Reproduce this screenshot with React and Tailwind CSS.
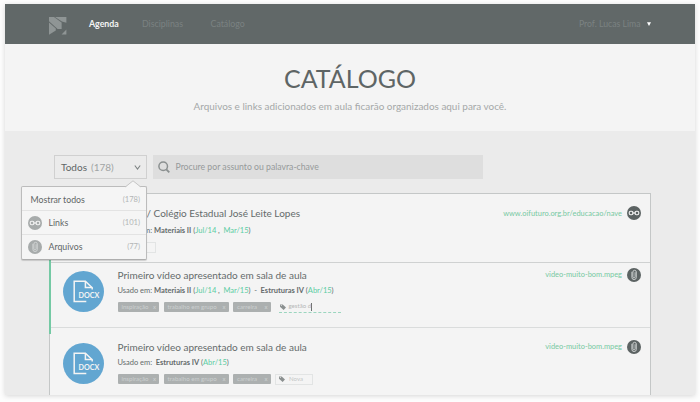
function Logo() {
  return (
    <svg className="h-[18px] w-[18px]" viewBox="0 0 18 18" fill="#8f9595">
      <path d="M0 0H5L12.6 5.4V12H8.6L0 4.2Z" />
      <path d="M6 0H17.4V5.8L12.9 4.6Z" />
      <path d="M0 5.4L6.8 11.6V13.6L0 17.8Z" />
      <path d="M17.4 12.6V17.6H12.6Z" />
    </svg>
  );
}

function LinkIcon({ color }) {
  return (
    <svg className="block size-3.5 shrink-0" viewBox="0 0 14 14">
      <circle cx="7" cy="7" r="7" fill={color} />
      <g fill="none" stroke="#f4f4f4" strokeWidth="1.1">
        <rect x="2.2" y="5.2" width="3.8" height="3.6" rx="1.5" />
        <rect x="8" y="5.2" width="3.8" height="3.6" rx="1.5" />
        <path d="M5 7H9" />
      </g>
    </svg>
  );
}

function ClipIcon({ color }) {
  return (
    <svg className="block size-3.5 shrink-0" viewBox="0 0 14 14">
      <circle cx="7" cy="7" r="7" fill={color} />
      <path
        d="M4.9 4.2V9.4A2.2 2.2 0 0 0 9.3 9.4V4A1.7 1.7 0 0 0 5.9 4V8.8A1.1 1.1 0 0 0 8.1 8.8V4.6"
        fill="none"
        stroke="#d3d6d6"
        strokeWidth="0.9"
        strokeLinecap="round"
      />
    </svg>
  );
}

function DocxIcon() {
  return (
    <svg className="mt-[7.5px] block size-[41px] shrink-0" viewBox="0 0 41 41">
      <circle cx="20.5" cy="20.5" r="20.5" fill="#62a6d1" />
      <g fill="none" stroke="#f4f4f4" strokeWidth="1.5">
        <path d="M23.3 30.6H11.2V10.3H22.4L29.2 16.8V18.6" />
        <path d="M22.4 10.3V16.6H29.2" />
      </g>
      <text x="15.6" y="26.8" fill="#f4f4f4" className="font-['Lato',sans-serif] text-[7.2px] font-bold">
        DOCX
      </text>
    </svg>
  );
}

function TagIcon() {
  return (
    <svg className="block size-[6px] shrink-0" viewBox="0 0 6 6">
      <path d="M0 0.4H2.7L6 3.5L3.6 5.9L0 2.8Z" fill="#8b9090" />
      <circle cx="1.3" cy="1.6" r="0.5" fill="#f4f4f4" />
    </svg>
  );
}

function Tag({ label, width }) {
  return (
    <span className={`flex h-[10.5px] items-center justify-between rounded-[1px] bg-[#acb0b0] pr-[3px] pl-1 text-[6.1px] leading-none text-[#cdd0d0] ${width}`}>
      <span>{label}</span>
      <span>x</span>
    </span>
  );
}

function Tags({ children }) {
  return (
    <div className="mt-[4.5px] flex h-[11px] items-start gap-[4.5px]">
      <Tag label="inspiração" width="w-[41.5px]" />
      <Tag label="trabalho em grupo" width="w-[65px]" />
      <Tag label="carreira" width="w-[37.5px]" />
      {children}
    </div>
  );
}

function NewTag() {
  return (
    <span className="flex h-[11px] w-[38px] items-center gap-1 border border-[#e2e4e4] pl-[3px] text-[6.1px] leading-none text-[#c4c7c7]">
      <TagIcon />
      Nova
    </span>
  );
}

function When({ children }) {
  return <span className="text-[#5acda3]">{children}</span>;
}

function Entry({ title, usage, tags, link, icon, thumb, className, usageGap = 'mt-[2px]' }) {
  return (
    <div className={`flex shrink-0 ${className}`}>
      <div className="w-[54.5px] shrink-0">{thumb}</div>
      <div className="flex-1">
        <div className="mt-1 text-[10px] leading-4 whitespace-pre text-[#646b6b]">{title}</div>
        <div className={`text-[7.5px] leading-3 [word-spacing:-0.1px] whitespace-pre text-[#646b6b] ${usageGap}`}>{usage}</div>
        {tags}
      </div>
      <div className="mt-[4px] flex h-4 items-center gap-[5px] text-[7.45px] text-[#77c9a2]">
        <span>{link}</span>
        {icon}
      </div>
    </div>
  );
}

function MenuRow({ icon, label, count }) {
  return (
    <div className="flex h-[24px] items-center border-t border-[#e3e3e3] pr-[6px] pl-[6px] first:h-[23px] first:border-t-0 first:pt-[2px] first:pl-[8.5px]">
      {icon && <span className="mr-[6.5px]">{icon}</span>}
      <span className="flex-1 text-[8.75px] text-[#5f6666]">{label}</span>
      <span className="text-[7.6px] text-[#b3b6b6]">{count}</span>
    </div>
  );
}

export default function App() {
  return (
    <div className="h-[402px] w-[700px] overflow-hidden bg-[#fdfdfd] px-[5px] pt-1 font-['Lato','Open_Sans',sans-serif]">
      <div className="flex h-[391px] flex-col bg-[#ebebeb] shadow-[0_1px_5px_rgba(0,0,0,0.16)]">
        <header className="flex h-10 shrink-0 items-center bg-[#616868] pr-[44.5px] pl-[44px] text-[8.8px] text-[#7b8282]">
          <div className="mt-[4px]"><Logo /></div>
          <span className="ml-[22px] w-[53px] font-bold text-[#f4f4f4]">Agenda</span>
          <span className="w-[68.5px]">Disciplinas</span>
          <span>Catálogo</span>
          <span className="ml-auto text-[8.7px]">Prof. Lucas Lima</span>
          <svg className="ml-[6px] h-1 w-1" viewBox="0 0 4 4"><path d="M0 0.3H4L2 4Z" fill="#fff" /></svg>
        </header>

        <section className="flex h-[87px] shrink-0 flex-col items-center bg-[#f4f4f4]">
          <h1 className="mt-[19px] text-[25px] leading-[30px] text-[#5e6565]">CATÁLOGO</h1>
          <p className="mt-[6px] text-[9.93px] leading-[14px] text-[#a5a8a8]">
            Arquivos e links adicionados em aula ficarão organizados aqui para você.
          </p>
        </section>

        <main className="flex min-h-0 flex-1 flex-col overflow-hidden pt-6 pl-[44px]">
          <div className="flex h-6 shrink-0 gap-[6px] pl-[5px]">
            <div className="relative flex w-[93px] items-center border border-[#d0d0d0] pr-[5px] pl-[6px] text-[10px] text-[#5f6666]">
              <span>Todos</span>
              <span className="ml-1 flex-1 text-[#a0a4a4]">(178)</span>
              <svg className="h-[5px] w-[7px]" viewBox="0 0 7 5"><path d="M0.8 0.5L3.5 4L6.2 0.5" fill="none" stroke="#7d8383" strokeWidth="1.1" /></svg>
              <div className="absolute top-[30px] left-[-34px] z-20 w-[126px] rounded-[2px] border border-[#bcbcbc] border-b-[#aeaeae] bg-[#f5f5f5] pb-px shadow-[0_1px_1px_rgba(0,0,0,0.15)]">
                <MenuRow label="Mostrar todos" count="(178)" />
                <MenuRow icon={<LinkIcon color="#a7abab" />} label="Links" count="(101)" />
                <MenuRow icon={<ClipIcon color="#a7abab" />} label="Arquivos" count="(77)" />
                <svg className="absolute -top-[7px] right-[5px] h-[8px] w-[16px]" viewBox="0 0 16 8">
                  <path d="M0.5 8V7L8 0.8L15.5 7V8Z" fill="#f5f5f5" />
                  <path d="M0.5 6.8L8 0.8L15.5 6.8" fill="none" stroke="#c4c4c4" />
                </svg>
              </div>
            </div>
            <div className="flex w-[330px] items-center gap-[5.5px] bg-[#dedede] pl-[5px] text-[8.7px] text-[#969a9a]">
              <svg className="size-3" viewBox="0 0 12 12" fill="none" stroke="#8b9090" strokeWidth="1.5">
                <circle cx="5.2" cy="5.2" r="4.3" />
                <path d="M8.3 8.3L11.3 11.3" strokeWidth="1.9" />
              </svg>
              Procure por assunto ou palavra-chave
            </div>
          </div>

          <div className="mt-[14px] flex w-[602px] flex-1 flex-col border border-b-0 border-[#c4c7c7] bg-[#f4f4f4]">
            <Entry
              className="h-[69px] border-b border-[#cfd1d1] pt-[7.4px] pr-[9px] pl-[13px]"
              usageGap="mt-[3.6px]"
              title="NAVE / Colégio Estadual José Leite Lopes"
              usage={<>Usado em: <b>Materiais II</b> (<When>Jul/14</When> ,  <When>Mar/15</When>)</>}
              tags={<div className="mt-[5px]"><NewTag /></div>}
              link="www.oifuturo.org.br/educacao/nave"
              icon={<LinkIcon color="#5c6363" />}
            />
            <Entry
              className="relative h-[65px] border-b border-[#dadcdc] pr-[9px] pl-[13px] before:absolute before:-top-[5px] before:-left-px before:z-10 before:h-[76px] before:w-[1.5px] before:bg-[#74c9a4]"
              thumb={<DocxIcon />}
              title="Primeiro vídeo apresentado em sala de aula"
              usage={<>Usado em: <b>Materiais II</b> (<When>Jul/14</When> ,  <When>Mar/15</When>)  -  <b>Estruturas IV</b> (<When>Abr/15</When>)</>}
              tags={
                <Tags>
                  <span className="ml-[3.5px] flex h-[11px] w-[62px] items-center gap-[3px] border-b border-dashed border-[#9bd6bf] pl-[1px] text-[6.1px] leading-none text-[#b4b7b7]">
                    <TagIcon />
                    <span className="flex h-[8px] items-center border-r border-[#6b7272]">gestão d</span>
                  </span>
                </Tags>
              }
              link="video-muito-bom.mpeg"
              icon={<ClipIcon color="#5c6363" />}
            />
            <Entry
              className="h-[67px] overflow-hidden pt-[7px] pr-[9px] pl-[13px]"
              thumb={<DocxIcon />}
              title="Primeiro vídeo apresentado em sala de aula"
              usage={<>Usado em:  <b>Estruturas IV</b> (<When>Abr/15</When>)</>}
              tags={<Tags><NewTag /></Tags>}
              link="video-muito-bom.mpeg"
              icon={<ClipIcon color="#5c6363" />}
            />
          </div>
        </main>
      </div>
    </div>
  );
}
